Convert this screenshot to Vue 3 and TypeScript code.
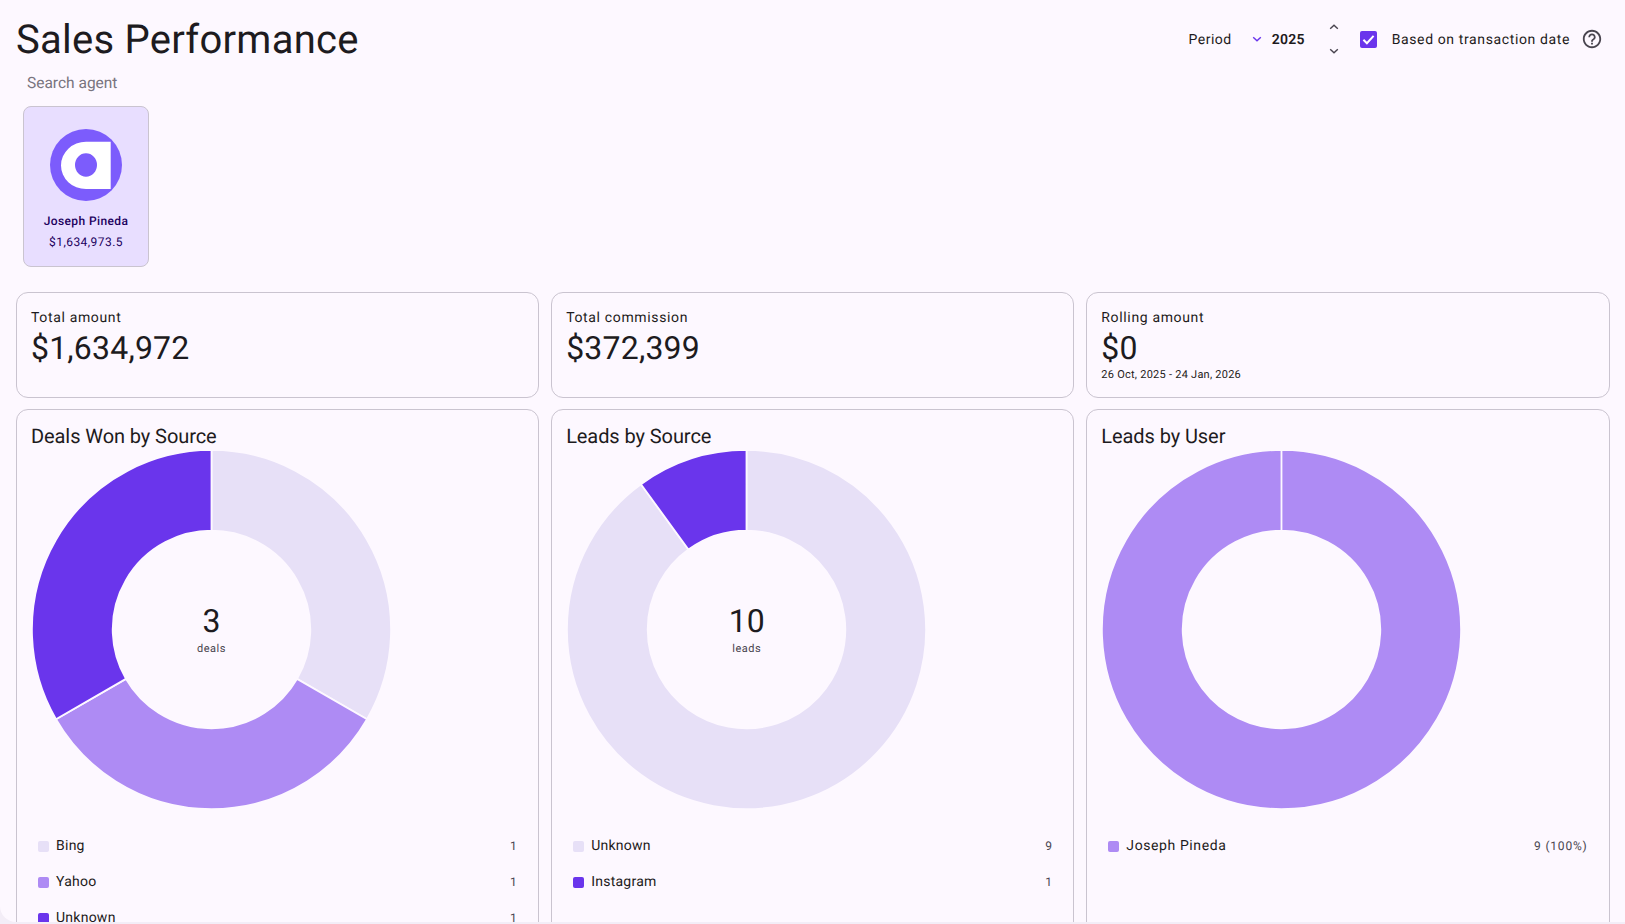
<script setup lang="ts">
interface Slice { label: string; value: number; display: string; color: string }
interface Chart { title: string; slices: Slice[]; spaced?: boolean; center?: { value: string; unit: string } }

const LIGHT = '#e7e0f7'
const MID = '#ae8bf4'
const DARK = '#6a35ec'

const stats = [
  { label: 'Total amount', value: '$1,634,972' },
  { label: 'Total commission', value: '$372,399' },
  { label: 'Rolling amount', value: '$0', note: '26 Oct, 2025 - 24 Jan, 2026' },
]

const charts: Chart[] = [
  {
    title: 'Deals Won by Source',
    center: { value: '3', unit: 'deals' },
    slices: [
      { label: 'Bing', value: 1, display: '1', color: LIGHT },
      { label: 'Yahoo', value: 1, display: '1', color: MID },
      { label: 'Unknown', value: 1, display: '1', color: DARK },
    ],
  },
  {
    title: 'Leads by Source',
    center: { value: '10', unit: 'leads' },
    slices: [
      { label: 'Unknown', value: 9, display: '9', color: LIGHT },
      { label: 'Instagram', value: 1, display: '1', color: DARK },
    ],
  },
  {
    title: 'Leads by User',
    spaced: true,
    slices: [{ label: 'Joseph Pineda', value: 9, display: '9 (100%)', color: MID }],
  },
]

const CX = 180.5
const CY = 180.5
const R_OUT = 179.6
const R_IN = 98.8

function point(r: number, deg: number): string {
  const a = ((deg - 90) * Math.PI) / 180
  return `${(CX + r * Math.cos(a)).toFixed(3)} ${(CY + r * Math.sin(a)).toFixed(3)}`
}

function arcs(slices: Slice[]) {
  const total = slices.reduce((s, x) => s + x.value, 0)
  let start = 0
  return slices.map((s) => {
    const sweep = Math.min((s.value / total) * 360, 359.99)
    const end = start + sweep
    const large = sweep > 180 ? 1 : 0
    const d =
      `M${point(R_OUT, start)} A${R_OUT} ${R_OUT} 0 ${large} 1 ${point(R_OUT, end)} ` +
      `L${point(R_IN, end)} A${R_IN} ${R_IN} 0 ${large} 0 ${point(R_IN, start)} Z`
    start = end
    return { d, color: s.color, label: s.label }
  })
}
</script>

<template>
  <div class="app">
    <main class="surface">
      <header class="top">
        <h1 class="title">Sales Performance</h1>
        <div class="controls">
          <span class="ctl-text">Period</span>
          <svg class="chev-main" width="10" height="6" viewBox="0 0 10 6" aria-hidden="true">
            <path d="M1.2 1.2 5 4.8 8.8 1.2" fill="none" stroke="#6a35ec" stroke-width="1.4" />
          </svg>
          <span class="ctl-text year">2025</span>
          <div class="stepper">
            <svg width="10" height="6" viewBox="0 0 10 6" aria-hidden="true">
              <path d="M1.2 4.8 5 1.2 8.8 4.8" fill="none" stroke="#49454f" stroke-width="1.4" />
            </svg>
            <svg width="10" height="6" viewBox="0 0 10 6" aria-hidden="true">
              <path d="M1.2 1.2 5 4.8 8.8 1.2" fill="none" stroke="#49454f" stroke-width="1.4" />
            </svg>
          </div>
          <span class="check">
            <svg width="17" height="17" viewBox="0 0 17 17" aria-hidden="true">
              <path d="M3.4 8.8 6.9 12.2 13.6 4.9" fill="none" stroke="#fff" stroke-width="2" />
            </svg>
          </span>
          <span class="ctl-text check-label">Based on transaction date</span>
          <svg class="help" width="22" height="22" viewBox="0 0 24 24" aria-hidden="true">
            <path
              fill="#49454f"
              d="M11 18h2v-2h-2v2zm1-16C6.48 2 2 6.48 2 12s4.48 10 10 10 10-4.48 10-10S17.52 2 12 2zm0 18c-4.41 0-8-3.59-8-8s3.59-8 8-8 8 3.59 8 8-3.59 8-8 8zm0-14c-2.21 0-4 1.79-4 4h2c0-1.1.9-2 2-2s2 .9 2 2c0 2-3 1.75-3 5h2c0-2.25 3-2.5 3-5 0-2.21-1.79-4-4-4z"
            />
          </svg>
        </div>
      </header>

      <div class="search">Search agent</div>

      <div class="agents">
        <article class="agent">
          <svg class="avatar" width="72" height="72" viewBox="0 0 72 72" aria-hidden="true">
            <circle cx="36" cy="36" r="36" fill="#7c5cfc" />
            <path
              fill="#fff"
              fill-rule="evenodd"
              d="M60.7 12.7H36A25 23.7 0 0 0 36 60.1H60.7ZM36 24.3A11 11.7 0 1 0 36 47.7 11 11.7 0 1 0 36 24.3Z"
            />
          </svg>
          <div class="agent-name">Joseph Pineda</div>
          <div class="agent-amount">$1,634,973.5</div>
        </article>
      </div>

      <section class="stats">
        <article v-for="s in stats" :key="s.label" class="card stat">
          <div class="stat-label">{{ s.label }}</div>
          <div class="stat-value">{{ s.value }}</div>
          <div v-if="s.note" class="stat-note">{{ s.note }}</div>
        </article>
      </section>

      <section class="charts">
        <article v-for="c in charts" :key="c.title" class="card chart">
          <h2 class="chart-title">{{ c.title }}</h2>
          <div class="donut">
            <svg width="361" height="361" viewBox="0 0 361 361" role="img" :aria-label="c.title">
              <path
                v-for="a in arcs(c.slices)"
                :key="a.label"
                :d="a.d"
                :fill="a.color"
                stroke="#fdf8ff"
                stroke-width="1.8"
              />
            </svg>
            <div v-if="c.center" class="donut-center">
              <div class="donut-value">{{ c.center.value }}</div>
              <div class="donut-unit">{{ c.center.unit }}</div>
            </div>
          </div>
          <ul class="legend" :class="{ spaced: c.spaced }">
            <li v-for="s in c.slices" :key="s.label" class="legend-row">
              <span class="swatch" :style="{ background: s.color }"></span>
              <span class="legend-label">{{ s.label }}</span>
              <span class="legend-value">{{ s.display }}</span>
            </li>
          </ul>
        </article>
      </section>
    </main>
  </div>
</template>

<style>
html,
body {
  margin: 0;
  background: #f3edf7;
}
</style>

<style scoped>
.app {
  height: 924px;
  overflow: hidden;
  background: #f3edf7;
  font-family: Roboto, "Noto Sans", sans-serif;
  color: #1d1b20;
  text-rendering: geometricPrecision;
}
.surface {
  height: 922px;
  box-sizing: border-box;
  padding: 0 15.5px 0 16px;
  background: #fdf8ff;
  border-bottom-left-radius: 16px;
  overflow: hidden;
}
.top {
  height: 72px;
  box-sizing: border-box;
  padding-top: 6px;
  display: flex;
  align-items: center;
  justify-content: space-between;
}
.title {
  margin: 0;
  padding-top: 1px;
  font-size: 40px;
  font-weight: 400;
  line-height: 48px;
  letter-spacing: 0.25px;
}
.controls {
  display: flex;
  align-items: center;
  padding-right: 6.5px;
  font-size: 14px;
  letter-spacing: 0.5px;
}
.ctl-text {
  padding-top: 2px;
}
.chev-main {
  margin-left: 20px;
}
.year {
  margin-left: 10px;
  font-weight: 600;
  letter-spacing: 0.25px;
}
.stepper {
  margin-left: 24px;
  height: 30px;
  display: flex;
  flex-direction: column;
  justify-content: space-between;
}
.stepper svg,
.chev-main,
.check svg,
.help {
  display: block;
}
.check {
  margin-left: 21px;
  width: 17px;
  height: 17px;
  border-radius: 2px;
  background: #6a35ec;
}
.check-label {
  margin-left: 15px;
  letter-spacing: 0.62px;
}
.help {
  margin-left: 11px;
}
.search {
  height: 22px;
  padding-left: 11px;
  font-size: 15.5px;
  line-height: 22px;
  color: #79747e;
}
.agents {
  margin-top: 12px;
  padding-left: 7px;
  display: flex;
}
.agent {
  width: 126px;
  height: 161px;
  box-sizing: border-box;
  border: 1px solid #cac4d0;
  border-radius: 8px;
  background: #e8deff;
  display: flex;
  flex-direction: column;
  align-items: center;
  padding-top: 22px;
  color: #21005d;
}
.avatar {
  display: block;
}
.agent-name {
  margin-top: 12px;
  font-size: 12px;
  font-weight: 500;
  line-height: 16px;
  letter-spacing: 0.4px;
}
.agent-amount {
  margin-top: 5px;
  font-size: 12px;
  line-height: 16px;
  letter-spacing: 0.45px;
}
.stats {
  margin-top: 25px;
  display: grid;
  grid-template-columns: repeat(3, 1fr);
  column-gap: 12px;
}
.card {
  box-sizing: border-box;
  border: 1px solid #cac4d0;
  border-radius: 12px;
}
.stat {
  height: 106px;
  padding: 15px 14px 0;
}
.stat-label {
  font-size: 14px;
  line-height: 20px;
  letter-spacing: 0.65px;
}
.stat-value {
  font-size: 32px;
  line-height: 40px;
  letter-spacing: 0.2px;
}
.stat-note {
  margin-top: 1px;
  font-size: 11px;
  line-height: 12px;
  letter-spacing: 0.25px;
}
.charts {
  margin-top: 11px;
  display: grid;
  grid-template-columns: repeat(3, 1fr);
  column-gap: 12px;
}
.chart {
  height: 620px;
  padding: 14px 14px 0;
}
.chart-title {
  margin: 0;
  font-size: 20px;
  font-weight: 400;
  line-height: 24px;
  letter-spacing: -0.08px;
}
.donut {
  position: relative;
  width: 361px;
  height: 361px;
  margin-top: 1px;
}
.donut svg {
  display: block;
}
.donut-center {
  position: absolute;
  left: 0;
  right: 0;
  top: 152px;
  text-align: center;
}
.donut-value {
  font-size: 32px;
  line-height: 40px;
}
.donut-unit {
  margin-top: 1px;
  font-size: 11px;
  line-height: 14px;
  letter-spacing: 0.5px;
  color: #49454f;
}
.legend {
  list-style: none;
  margin: 18px 0 0;
  padding: 0 7px;
}
.legend-row {
  height: 36px;
  display: flex;
  align-items: center;
  font-size: 14px;
  letter-spacing: 0.25px;
}
.swatch {
  width: 11px;
  height: 11px;
  border-radius: 2px;
  margin-right: 7px;
}
.legend-value {
  margin-left: auto;
  font-size: 12px;
  letter-spacing: 0.4px;
  color: #49454f;
}
.spaced .legend-label {
  letter-spacing: 0.6px;
}
.spaced .legend-value {
  letter-spacing: 0.8px;
}
</style>
